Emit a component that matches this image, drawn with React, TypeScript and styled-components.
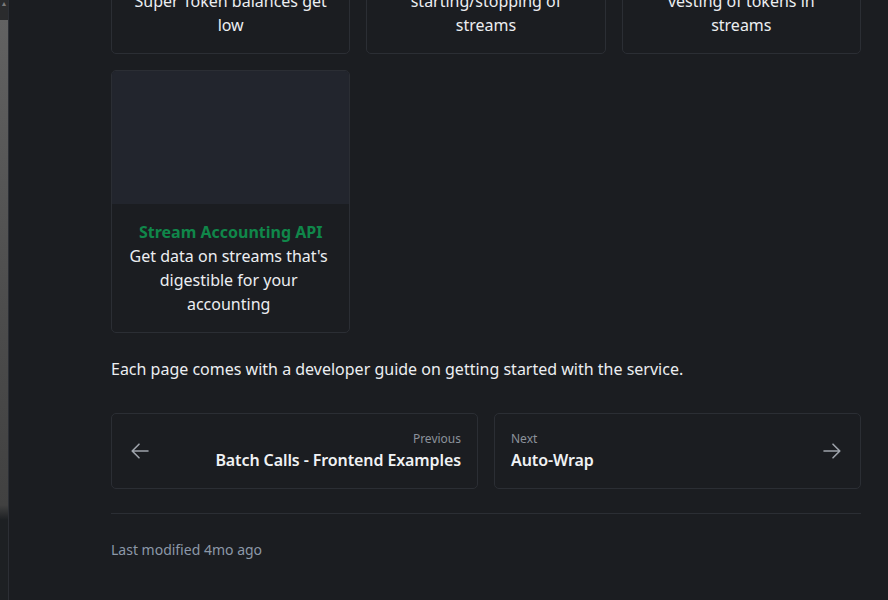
import React from "react";
import styled, { createGlobalStyle } from "styled-components";

const GlobalStyle = createGlobalStyle`
  html, body {
    margin: 0;
    padding: 0;
    background: #1b1d21;
    overflow: hidden;
  }
  body {
    font-family: "Noto Sans", "Open Sans", sans-serif;
    color: #e9ebee;
    -webkit-font-smoothing: antialiased;
  }
`;

const Page = styled.div`
  display: flex;
  width: 888px;
  height: 600px;
  overflow: hidden;
  background: #1b1d21;
`;

const SideRail = styled.div`
  flex: 0 0 8px;
  display: flex;
  flex-direction: column;
  border-right: 1px solid #2c2f35;
  background: #1d2023;
`;

const RailButton = styled.div`
  height: 20px;
  background: #2a2b2d;
  display: flex;
  align-items: flex-start;
  justify-content: center;
  color: #7a7a7a;
  font-size: 7px;
  line-height: 8px;
`;

const RailThumb = styled.div`
  height: 500px;
  background: linear-gradient(#626262 0%, #4c4c4c 60%, #414141 97%, #1d2023 100%);
`;

const Main = styled.main`
  flex: 1;
  padding-left: 102px;
`;

const Content = styled.div`
  width: 750px;
  margin-top: -209px;
`;

const CardGrid = styled.div`
  display: grid;
  grid-template-columns: repeat(3, 1fr);
  gap: 16px;
`;

const Card = styled.div`
  display: flex;
  flex-direction: column;
  border: 1px solid #2b2e34;
  border-radius: 5px;
  overflow: hidden;
  background: #1b1d21;
`;

const CardCover = styled.div`
  height: 133px;
  background: #22252d;
`;

const CardBody = styled.div`
  padding: 16px;
  text-align: center;
  font-size: 16px;
  line-height: 24px;
`;

const CardTitle = styled.div`
  color: #10874a;
  font-weight: 700;
`;

const CardText = styled.div<{ $shift?: number }>`
  color: #eceef1;
  white-space: pre-line;
  padding-right: ${(p) => p.$shift ?? 0}px;
`;

const Paragraph = styled.p`
  margin: 24px 0 0;
  font-size: 16px;
  line-height: 24px;
  color: #eceef1;
`;

const PagerRow = styled.nav`
  display: grid;
  grid-template-columns: 1fr 1fr;
  gap: 16px;
  margin-top: 32px;
`;

const PagerLink = styled.a<{ $next?: boolean }>`
  display: flex;
  align-items: center;
  flex-direction: ${(p) => (p.$next ? "row" : "row-reverse")};
  justify-content: space-between;
  border: 1px solid #2b2e34;
  border-radius: 5px;
  padding: 16px ${(p) => (p.$next ? "19px 16px 16px" : "16px 16px 19px")};
  text-decoration: none;
  color: inherit;
`;

const PagerText = styled.div<{ $next?: boolean }>`
  display: flex;
  flex-direction: column;
  align-items: ${(p) => (p.$next ? "flex-start" : "flex-end")};
`;

const PagerLabel = styled.span`
  font-size: 12px;
  line-height: 18px;
  color: #8b929b;
`;

const PagerTitle = styled.span`
  font-size: 16px;
  line-height: 24px;
  font-weight: 600;
  letter-spacing: -0.1px;
  color: #f0f2f4;
`;

const Arrow = styled.svg`
  flex: 0 0 auto;
  color: #9ea3ab;
`;

const Divider = styled.hr`
  border: none;
  border-top: 1px solid #2b2e34;
  margin: 24px 0 0;
`;

const Modified = styled.div`
  margin-top: 26px;
  font-size: 14px;
  line-height: 20px;
  color: #8c98a8;
`;

const cards = [
  {
    title: "Auto-Wrap",
    text: "Never let your\nSuper Token balances get\nlow",
    shift: 0,
  },
  {
    title: "Stream Scheduler",
    text: "Schedule the\nstarting/stopping of\nstreams",
    shift: 0,
  },
  {
    title: "Vesting Scheduler",
    text: "Schedule the\nvesting of tokens in\nstreams",
    shift: 0,
  },
  {
    title: "Stream Accounting API",
    text: "Get data on streams that's digestible for your accounting",
    shift: 4,
  },
];

const LeftArrow = () => (
  <Arrow width="18" height="16" viewBox="0 0 18 16" fill="none">
    <path d="M17 8H1.5M8 1.2L1.2 8L8 14.8" stroke="currentColor" strokeWidth="1.6" strokeLinecap="round" strokeLinejoin="round" />
  </Arrow>
);

const RightArrow = () => (
  <Arrow width="18" height="16" viewBox="0 0 18 16" fill="none">
    <path d="M1 8H16.5M10 1.2L16.8 8L10 14.8" stroke="currentColor" strokeWidth="1.6" strokeLinecap="round" strokeLinejoin="round" />
  </Arrow>
);

export default function App() {
  return (
    <>
      <GlobalStyle />
      <Page>
        <SideRail>
          <RailButton>▲</RailButton>
          <RailThumb />
        </SideRail>
        <Main>
          <Content>
            <CardGrid>
              {cards.map((c) => (
                <Card key={c.title}>
                  <CardCover />
                  <CardBody>
                    <CardTitle>{c.title}</CardTitle>
                    <CardText $shift={c.shift}>{c.text}</CardText>
                  </CardBody>
                </Card>
              ))}
            </CardGrid>
            <Paragraph>Each page comes with a developer guide on getting started with the service.</Paragraph>
            <PagerRow>
              <PagerLink href="#">
                <PagerText>
                  <PagerLabel>Previous</PagerLabel>
                  <PagerTitle>Batch Calls - Frontend Examples</PagerTitle>
                </PagerText>
                <LeftArrow />
              </PagerLink>
              <PagerLink href="#" $next>
                <PagerText $next>
                  <PagerLabel>Next</PagerLabel>
                  <PagerTitle>Auto-Wrap</PagerTitle>
                </PagerText>
                <RightArrow />
              </PagerLink>
            </PagerRow>
            <Divider />
            <Modified>Last modified 4mo ago</Modified>
          </Content>
        </Main>
      </Page>
    </>
  );
}
